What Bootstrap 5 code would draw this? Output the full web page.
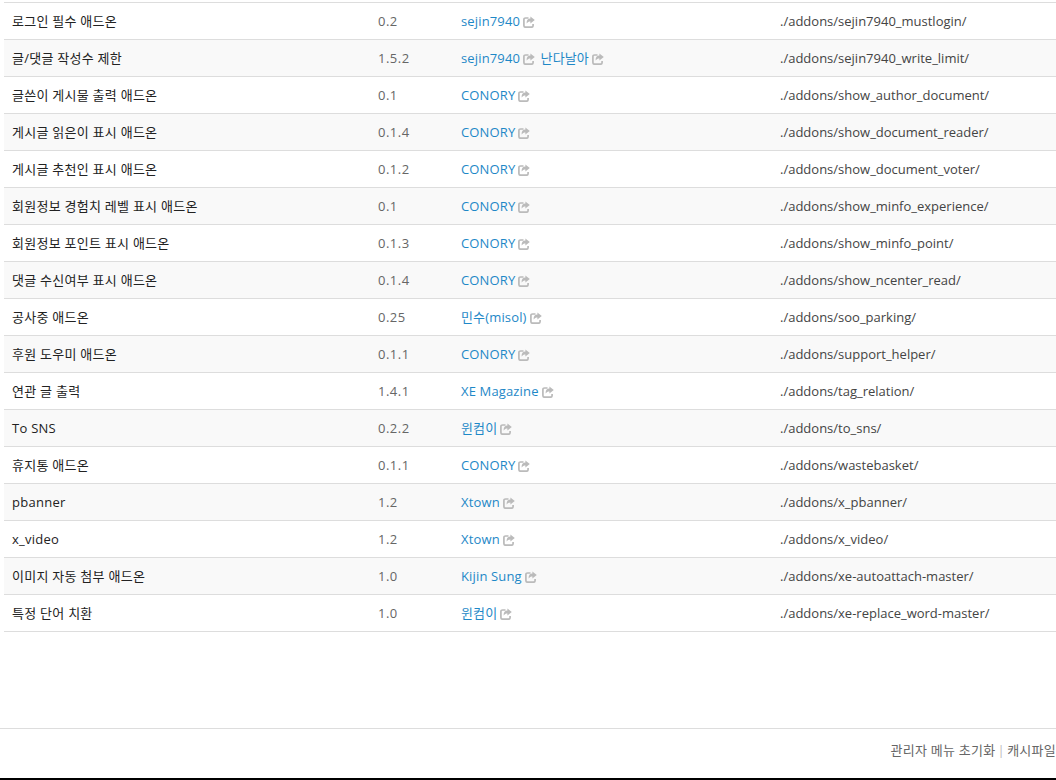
<!doctype html>
<html lang="ko"><head><meta charset="utf-8"><title>애드온</title>
<link href="https://cdn.jsdelivr.net/npm/bootstrap@5.3.0/dist/css/bootstrap.min.css" rel="stylesheet">
<style>
html,body{height:780px;overflow:hidden}
body{font-family:"Open Sans","Noto Sans CJK KR",sans-serif;font-size:13px;color:#333;background:#fff;display:flex;flex-direction:column}
.addon-wrap{padding:2px 0 0 4px;flex:1 1 auto}
.addon-table{table-layout:fixed;width:1052px;margin:0;border-top:1px solid #ddd;color:#333}
.addon-table td{height:37px;padding:0 8px;border-bottom:1px solid #ddd;vertical-align:middle;line-height:20px;white-space:nowrap;color:#444;background:transparent;box-shadow:none}
.addon-table td:first-child{color:#222;letter-spacing:.26px}
.addon-table tr:nth-child(even) td{background:#f9f9f9}
.addon-table .c1{width:366px}.addon-table .c2{width:83px}.addon-table .c3{width:319px}
.addon-table td.ver{color:#666;letter-spacing:.5px}
.addon-table a{color:#1e88c7;text-decoration:none;letter-spacing:.15px}
.ext{display:inline-block;width:12px;height:12px;vertical-align:-2px;margin-left:3px;margin-right:2px}
.foot-bar{height:50px;border-top:1px solid #ddd;text-align:right;padding-top:11px;color:#666;line-height:20px;flex:none;letter-spacing:.25px}
.foot-bar a{color:#666;text-decoration:none}
.foot-sep{color:#bbb;margin:0 -1.5px}
.end-line{height:2px;background:#000;flex:none}
</style></head><body>
<svg width="0" height="0" class="d-none"><symbol id="ex" viewBox="0 0 12 12"><path d="M5.5 2H2.5A1.6 1.6 0 0 0 .9 3.6v6a1.6 1.6 0 0 0 1.6 1.6h6a1.6 1.6 0 0 0 1.6-1.6V8" fill="none" stroke="#bbb" stroke-width="1.7"/><path d="M7.4 .4v2.2C4.8 2.6 3.5 4.4 3.6 7.6 4.6 6 5.8 5.4 7.4 5.4v2.2L11.8 4z" fill="#bbb"/></symbol></svg>
<div class="addon-wrap">
<table class="table addon-table"><colgroup><col class="c1"><col class="c2"><col class="c3"><col></colgroup><tbody id="tb">
<tr><td>로그인 필수 애드온</td><td class="ver">0.2</td><td><a href="#">sejin7940</a><svg class="ext"><use href="#ex"/></svg></td><td>./addons/sejin7940_mustlogin/</td></tr>
<tr><td>글/댓글 작성수 제한</td><td class="ver">1.5.2</td><td><a href="#">sejin7940</a><svg class="ext"><use href="#ex"/></svg> <a href="#">난다날아</a><svg class="ext"><use href="#ex"/></svg></td><td>./addons/sejin7940_write_limit/</td></tr>
<tr><td>글쓴이 게시물 출력 애드온</td><td class="ver">0.1</td><td><a href="#">CONORY</a><svg class="ext"><use href="#ex"/></svg></td><td>./addons/show_author_document/</td></tr>
<tr><td>게시글 읽은이 표시 애드온</td><td class="ver">0.1.4</td><td><a href="#">CONORY</a><svg class="ext"><use href="#ex"/></svg></td><td>./addons/show_document_reader/</td></tr>
<tr><td>게시글 추천인 표시 애드온</td><td class="ver">0.1.2</td><td><a href="#">CONORY</a><svg class="ext"><use href="#ex"/></svg></td><td>./addons/show_document_voter/</td></tr>
<tr><td>회원정보 경험치 레벨 표시 애드온</td><td class="ver">0.1</td><td><a href="#">CONORY</a><svg class="ext"><use href="#ex"/></svg></td><td>./addons/show_minfo_experience/</td></tr>
<tr><td>회원정보 포인트 표시 애드온</td><td class="ver">0.1.3</td><td><a href="#">CONORY</a><svg class="ext"><use href="#ex"/></svg></td><td>./addons/show_minfo_point/</td></tr>
<tr><td>댓글 수신여부 표시 애드온</td><td class="ver">0.1.4</td><td><a href="#">CONORY</a><svg class="ext"><use href="#ex"/></svg></td><td>./addons/show_ncenter_read/</td></tr>
<tr><td>공사중 애드온</td><td class="ver">0.25</td><td><a href="#">민수(misol)</a><svg class="ext"><use href="#ex"/></svg></td><td>./addons/soo_parking/</td></tr>
<tr><td>후원 도우미 애드온</td><td class="ver">0.1.1</td><td><a href="#">CONORY</a><svg class="ext"><use href="#ex"/></svg></td><td>./addons/support_helper/</td></tr>
<tr><td>연관 글 출력</td><td class="ver">1.4.1</td><td><a href="#">XE Magazine</a><svg class="ext"><use href="#ex"/></svg></td><td>./addons/tag_relation/</td></tr>
<tr><td>To SNS</td><td class="ver">0.2.2</td><td><a href="#">윈컴이</a><svg class="ext"><use href="#ex"/></svg></td><td>./addons/to_sns/</td></tr>
<tr><td>휴지통 애드온</td><td class="ver">0.1.1</td><td><a href="#">CONORY</a><svg class="ext"><use href="#ex"/></svg></td><td>./addons/wastebasket/</td></tr>
<tr><td>pbanner</td><td class="ver">1.2</td><td><a href="#">Xtown</a><svg class="ext"><use href="#ex"/></svg></td><td>./addons/x_pbanner/</td></tr>
<tr><td>x_video</td><td class="ver">1.2</td><td><a href="#">Xtown</a><svg class="ext"><use href="#ex"/></svg></td><td>./addons/x_video/</td></tr>
<tr><td>이미지 자동 첨부 애드온</td><td class="ver">1.0</td><td><a href="#">Kijin Sung</a><svg class="ext"><use href="#ex"/></svg></td><td>./addons/xe-autoattach-master/</td></tr>
<tr><td>특정 단어 치환</td><td class="ver">1.0</td><td><a href="#">윈컴이</a><svg class="ext"><use href="#ex"/></svg></td><td>./addons/xe-replace_word-master/</td></tr>
</tbody></table>
</div>
<div class="foot-bar"><a href="#">관리자 메뉴 초기화</a> <span class="foot-sep">|</span> <a href="#">캐시파일</a></div>
<div class="end-line"></div>
<script src="https://cdn.jsdelivr.net/npm/bootstrap@5.3.0/dist/js/bootstrap.bundle.min.js"></script>
</body></html>
